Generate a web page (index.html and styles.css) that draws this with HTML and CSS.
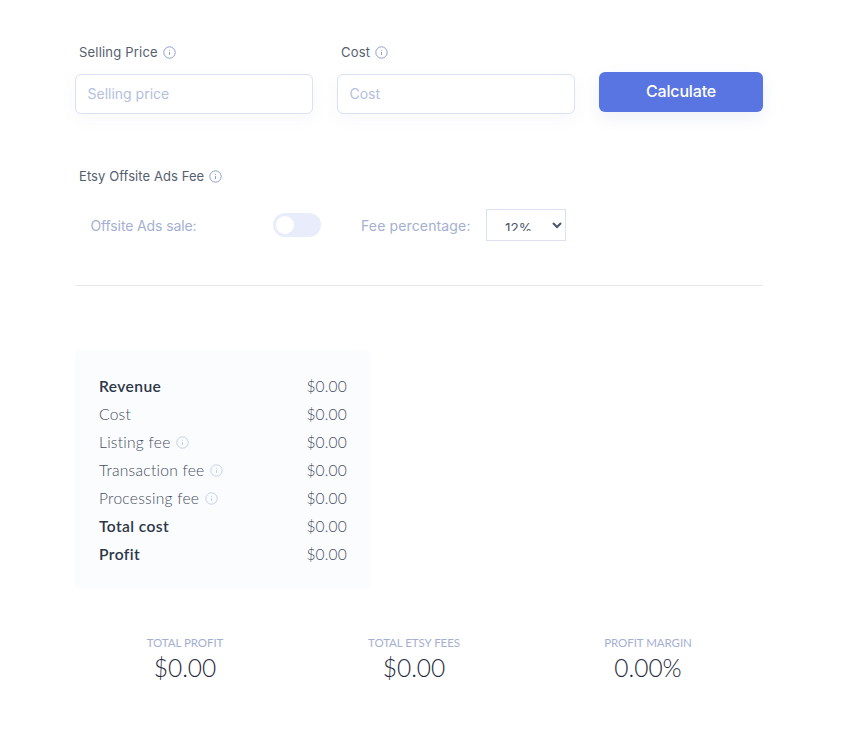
FILE: index.html
```html
<!DOCTYPE html>
<html lang="en">
<head>
<meta charset="utf-8">
<title>Etsy Fee Calculator</title>
<link rel="stylesheet" href="styles.css">
</head>
<body>
<svg class="defs" width="0" height="0" aria-hidden="true"><defs><symbol id="info" viewBox="0 0 13 13"><circle cx="6.5" cy="6.5" r="5.7" fill="none" stroke="currentColor" stroke-width="1"/><path d="M6.5 3.9v.9M6.5 6v3" fill="none" stroke="currentColor" stroke-width="1"/></symbol></defs></svg>
<main class="page">
  <section class="inputs">
    <div class="field">
      <div class="label"><span>Selling Price</span><svg class="info"><use href="#info"/></svg></div>
      <input class="text" type="text" placeholder="Selling price">
    </div>
    <div class="field">
      <div class="label"><span>Cost</span><svg class="info"><use href="#info"/></svg></div>
      <input class="text" type="text" placeholder="Cost">
    </div>
    <button class="calc" type="button">Calculate</button>
  </section>
  <section class="ads">
    <div class="label label-tight"><span>Etsy Offsite Ads Fee</span><svg class="info"><use href="#info"/></svg></div>
    <div class="ads-row">
      <span class="ads-text ads-sale">Offsite Ads sale:</span>
      <span class="toggle"><span class="knob"></span></span>
      <span class="ads-text ads-fee">Fee percentage:</span>
      <select class="pct"><option>12%</option><option>15%</option></select>
    </div>
  </section>
  <hr class="rule">
  <section class="summary">
    <div class="row strong"><span>Revenue</span><span class="amt">$0.00</span></div>
    <div class="row"><span>Cost</span><span class="amt">$0.00</span></div>
    <div class="row"><span>Listing fee <svg class="info light"><use href="#info"/></svg></span><span class="amt">$0.00</span></div>
    <div class="row"><span>Transaction fee <svg class="info light"><use href="#info"/></svg></span><span class="amt">$0.00</span></div>
    <div class="row"><span>Processing fee <svg class="info light"><use href="#info"/></svg></span><span class="amt">$0.00</span></div>
    <div class="row strong"><span>Total cost</span><span class="amt">$0.00</span></div>
    <div class="row strong"><span>Profit</span><span class="amt">$0.00</span></div>
  </section>
  <section class="totals">
    <div class="total"><div class="cap">TOTAL PROFIT</div><div class="val">$0.00</div></div>
    <div class="total"><div class="cap">TOTAL ETSY FEES</div><div class="val">$0.00</div></div>
    <div class="total"><div class="cap">PROFIT MARGIN</div><div class="val">0.00%</div></div>
  </section>
</main>
</body>
</html>
```
FILE: styles.css
```css
* { box-sizing: border-box; }
html, body { margin: 0; padding: 0; background: #fff; }
body { height: 737px; overflow: hidden; font-family: Inter, "Liberation Sans", sans-serif; color: #2d3748; }
.defs { display: block; height: 0; }
.page { width: 688px; margin-left: 75px; padding-top: 44px; }
.inputs { display: flex; align-items: flex-start; gap: 24px; }
.field { width: 238px; display: flex; flex-direction: column; }
.label { font-size: 13px; line-height: 17px; letter-spacing: 0.2px; color: #555e70; padding-left: 4px; display: flex; align-items: center; gap: 5px; white-space: pre; }
.label-tight { letter-spacing: 0.08px; }
.info { width: 13px; height: 13px; color: #8e9fcb; flex: none; }
.info.light { color: #c5cfe6; vertical-align: -0.5px; margin-left: 1px; }
.text { margin-top: 13px; height: 40px; width: 100%; border: 1px solid #dbe0f3; border-radius: 6px; padding: 0 11.5px 2px; font: 14px Inter, sans-serif; color: #4a5568; background: #fff; box-shadow: 0 6px 16px rgba(90, 110, 180, 0.05); outline: none; }
.text::placeholder { color: #b3c0e0; opacity: 1; }
.calc { margin-top: 28px; width: 164px; height: 40px; border: 0; border-radius: 6px; background: #5975e2; color: #fff; font: 500 16px Inter, sans-serif; letter-spacing: -0.15px; box-shadow: 0 6px 16px rgba(90, 110, 180, 0.1); padding: 0 0 2px; }
.ads { margin-top: 54px; }
.ads-row { display: flex; align-items: center; margin-top: 24px; height: 32px; }
.ads-text { font-size: 14px; color: #a4b0d2; white-space: nowrap; }
.ads-sale { margin-left: 15.5px; width: 182.5px; letter-spacing: -0.12px; }
.toggle { width: 48px; height: 24px; border-radius: 12px; background: #e9ecfb; padding: 3px; display: block; flex: none; }
.knob { display: block; width: 18px; height: 18px; border-radius: 50%; background: #fff; }
.ads-fee { margin-left: 40px; width: 125px; letter-spacing: 0.14px; }
.pct { width: 80px; height: 32px; border: 1px solid #dbe0f3; border-radius: 0; background: #fff; color: #4a5568; font: 13.5px Inter, sans-serif; padding: 9px 12px 9px 14px; outline: none; }
.rule { margin: 44px 0 0; border: 0; border-top: 1px solid #e8eaf3; }
.summary { margin-top: 64px; width: 296px; height: 240px; padding: 22px 24px 24px; background: #fbfcfe; border-radius: 6px; font-family: Lato, sans-serif; }
.row { height: 28px; display: flex; justify-content: space-between; align-items: center; font-size: 15.6px; font-weight: 300; color: #454e62; letter-spacing: 0.25px; }
.row .amt { font-size: 15.5px; letter-spacing: 0.2px; }
.strong > span:first-child { font-weight: 600; color: #2d3748; letter-spacing: 0.4px; }
.totals { margin-top: 46px; height: 60px; display: grid; grid-template-columns: 220px 238px 230px; }
.total { text-align: center; }
.cap { font-size: 11.5px; line-height: 14px; color: #a4b0d2; font-family: Lato, sans-serif; letter-spacing: -0.05px; }
.val { font-family: Lato, sans-serif; font-size: 24.5px; line-height: 30px; margin-top: 3px; color: #1f2a3d; font-weight: 300; }
```
